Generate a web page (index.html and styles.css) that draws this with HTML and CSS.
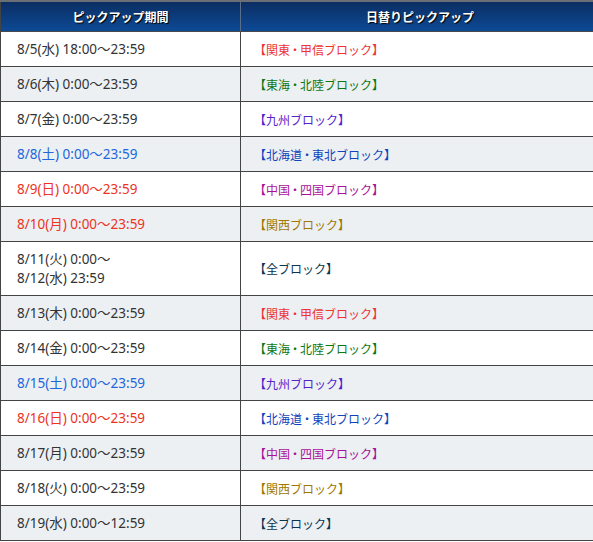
FILE: index.html
```html
<!DOCTYPE html>
<html lang="ja">
<head>
<meta charset="utf-8">
<link rel="stylesheet" href="styles.css">
</head>
<body>
<table class="pickup">
  <thead>
    <tr><th class="c1">ピックアップ期間</th><th class="c2">日替りピックアップ</th></tr>
  </thead>
  <tbody>
    <tr><td>8/5(水) 18:00～23:59</td><td class="kanto">【関東<span class="dot">・</span>甲信ブロック】</td></tr>
    <tr><td>8/6(木) 0:00～23:59</td><td class="tokai">【東海<span class="dot">・</span>北陸ブロック】</td></tr>
    <tr><td>8/7(金) 0:00～23:59</td><td class="kyushu">【九州ブロック】</td></tr>
    <tr><td class="sat">8/8(土) 0:00～23:59</td><td class="hokkaido">【北海道<span class="dot">・</span>東北ブロック】</td></tr>
    <tr><td class="sun">8/9(日) 0:00～23:59</td><td class="chugoku">【中国<span class="dot">・</span>四国ブロック】</td></tr>
    <tr><td class="sun">8/10(月) 0:00～23:59</td><td class="kansai">【関西ブロック】</td></tr>
    <tr class="tall"><td>8/11(火) 0:00～<br>8/12(水) 23:59</td><td class="all">【全ブロック】</td></tr>
    <tr><td>8/13(木) 0:00～23:59</td><td class="kanto">【関東<span class="dot">・</span>甲信ブロック】</td></tr>
    <tr><td>8/14(金) 0:00～23:59</td><td class="tokai">【東海<span class="dot">・</span>北陸ブロック】</td></tr>
    <tr><td class="sat">8/15(土) 0:00～23:59</td><td class="kyushu">【九州ブロック】</td></tr>
    <tr><td class="sun">8/16(日) 0:00～23:59</td><td class="hokkaido">【北海道<span class="dot">・</span>東北ブロック】</td></tr>
    <tr><td>8/17(月) 0:00～23:59</td><td class="chugoku">【中国<span class="dot">・</span>四国ブロック】</td></tr>
    <tr><td>8/18(火) 0:00～23:59</td><td class="kansai">【関西ブロック】</td></tr>
    <tr><td>8/19(水) 0:00～12:59</td><td class="all">【全ブロック】</td></tr>
  </tbody>
</table>
</body>
</html>
```
FILE: styles.css
```css
html, body {
  margin: 0;
  padding: 0;
  background: #fff;
}
body {
  font-family: "Noto Sans", "Noto Sans CJK JP", sans-serif;
  font-size: 13.5px;
  color: #333;
}
.pickup {
  border-collapse: collapse;
  width: 600px;
  table-layout: fixed;
  border-top: 2px solid #6b6f75;
}
.pickup th {
  height: 29px;
  padding: 0;
  background: linear-gradient(#0b2d62, #0d4a96);
  color: #fff;
  font-family: "Noto Sans CJK JP", sans-serif;
  font-weight: bold;
  font-size: 12px;
  text-shadow: 1px 1px 1px #000;
  border-left: 1px solid #444;
  border-right: 1px solid #5a6e8c;
  border-bottom: 1px solid #4a4a4a;
  text-align: center;
  line-height: 29px;
}
.pickup th.c1 { width: 239px; }
.pickup td {
  height: 34px;
  padding: 0 0 0 16px;
  border: 1px solid #444;
  line-height: 19px;
  vertical-align: middle;
}
.pickup tbody tr:nth-child(even) td { background: #ecf0f3; }
.pickup tr.tall td { height: 53px; }
.pickup td:nth-child(2) {
  padding-left: 13px;
  font-family: "Noto Sans CJK JP", sans-serif;
  font-size: 12px;
}
.dot {
  font-feature-settings: "palt";
  padding: 0 2px;
}
.sat { color: #2266dd; }
.sun { color: #ee3322; }
.kanto { color: #ee3333; }
.tokai { color: #117711; }
.kyushu { color: #5522cc; }
.hokkaido { color: #1144bb; }
.chugoku { color: #aa1199; }
.kansai { color: #a07800; }
.all { color: #0a3550; }
```
